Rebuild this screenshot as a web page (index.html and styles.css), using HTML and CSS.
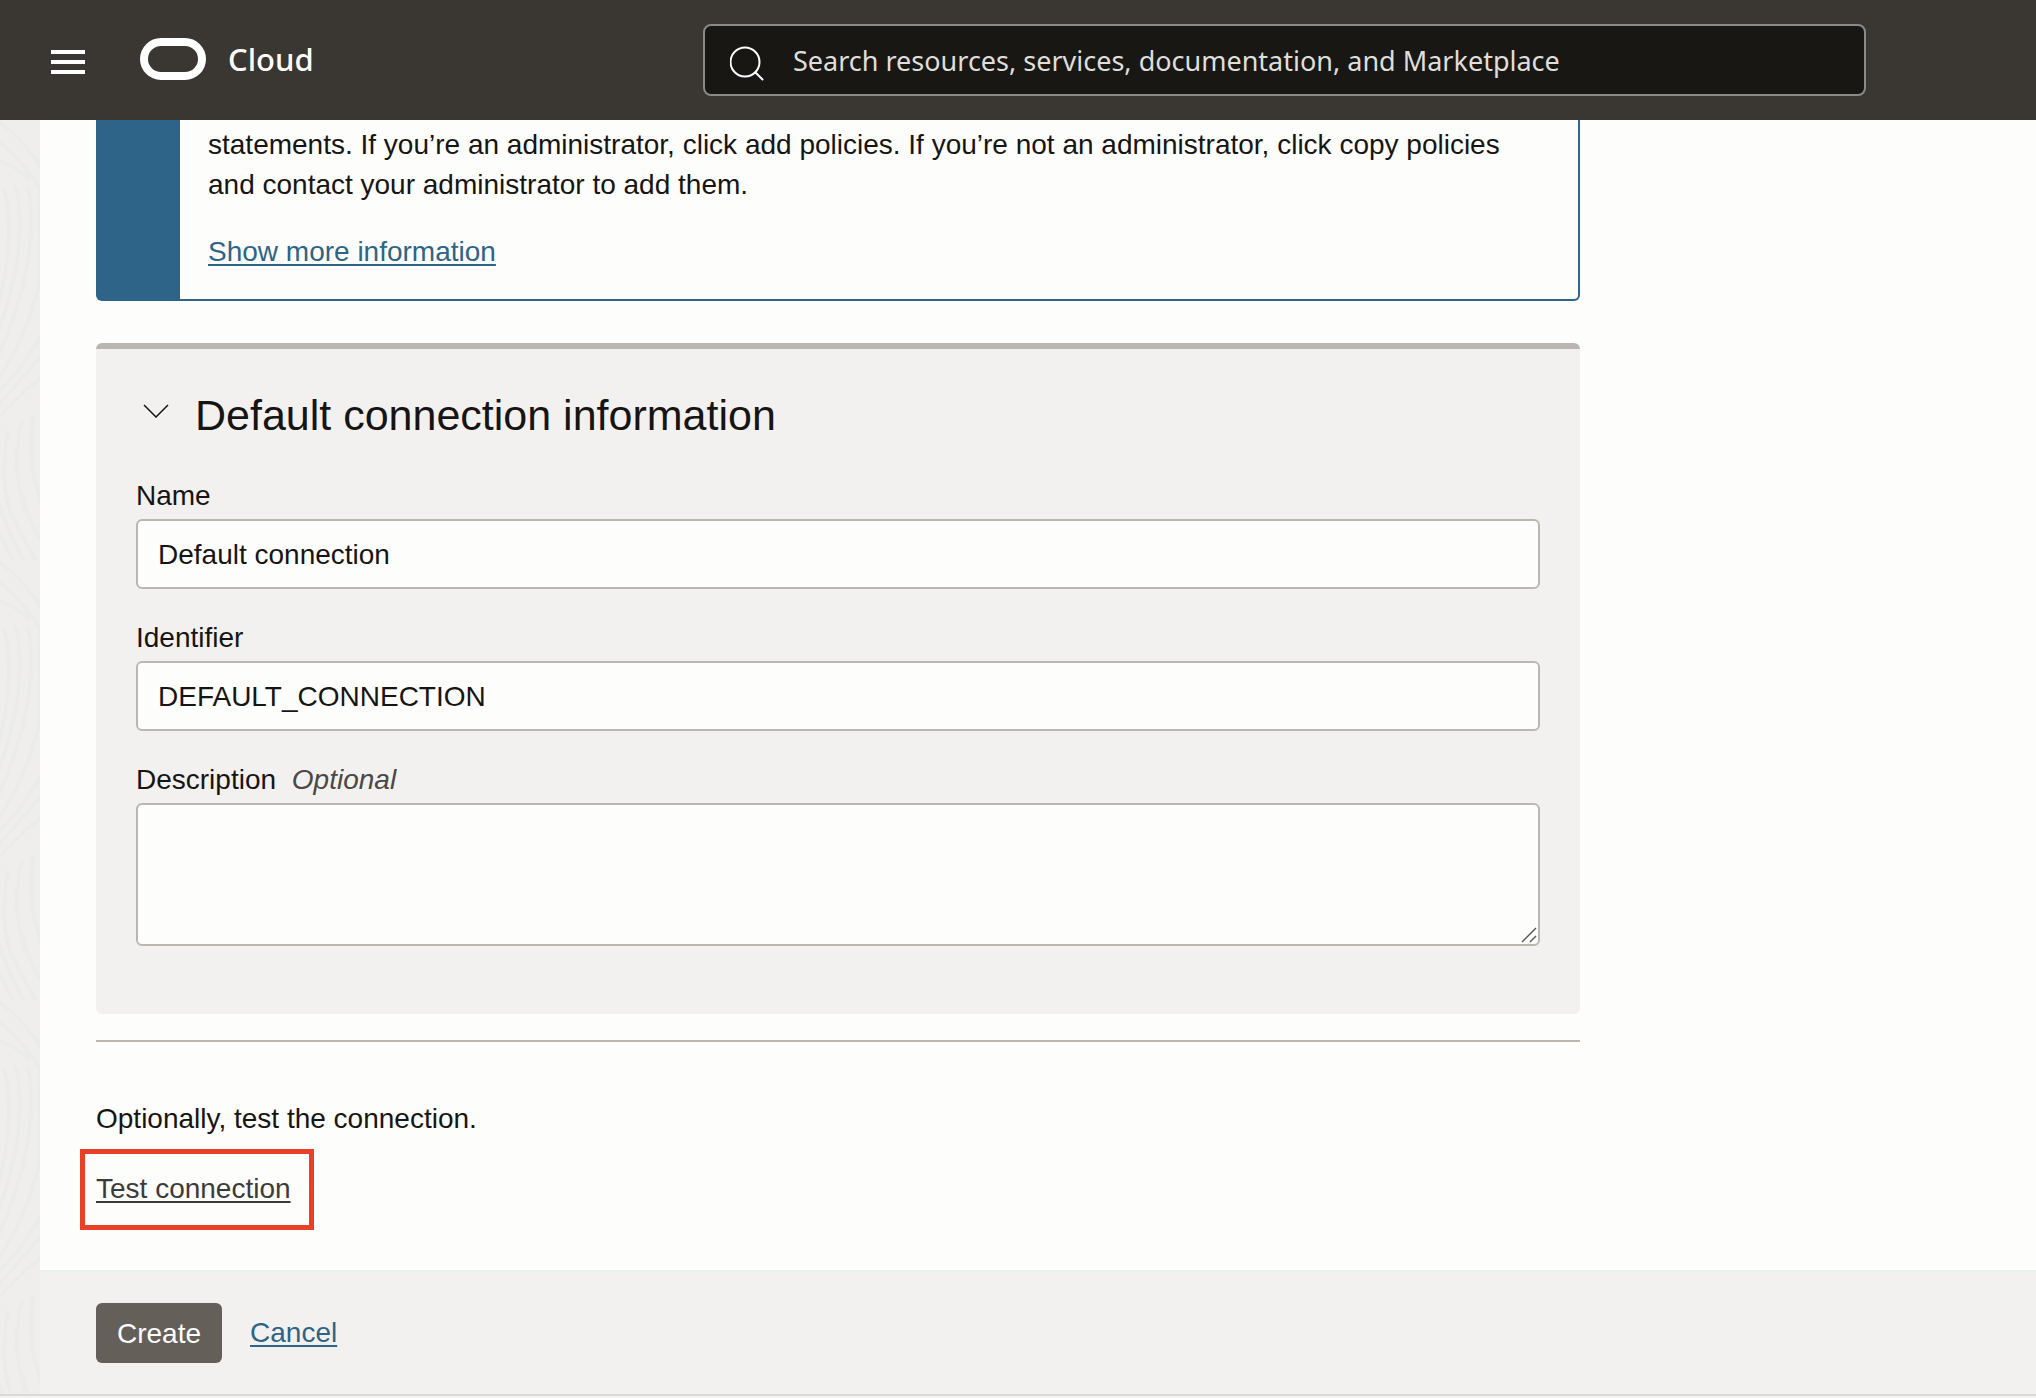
FILE: index.html
```html
<!DOCTYPE html>
<html lang="en">
<head>
<meta charset="utf-8">
<meta name="viewport" content="width=device-width, initial-scale=1">
<title>Create connection</title>
<link rel="stylesheet" href="styles.css">
</head>
<body>
<header class="topbar">
  <div class="brand">
    <button class="menu-button" type="button" aria-label="Open navigation menu">
      <svg width="34" height="24" viewBox="0 0 34 24" fill="#fff" aria-hidden="true"><path d="M0 0h34v4H0zM0 10h34v4H0zM0 20h34v4H0z"/></svg>
    </button>
    <a class="logo" href="#">
      <svg width="66" height="42" viewBox="0 0 66 42" fill="none" stroke="#fff" stroke-width="8" aria-hidden="true"><rect x="4" y="4" width="58" height="34" rx="17"/></svg>
      <span>Cloud</span>
    </a>
  </div>
  <label class="search">
    <svg width="36" height="36" viewBox="0 0 36 36" fill="none" stroke="#fff" stroke-width="2" stroke-linecap="round" aria-hidden="true"><circle cx="15" cy="16" r="14.5"/><path d="M25.500 26.500l7 7"/></svg>
    <input class="search-input" type="search" placeholder="Search resources, services, documentation, and Marketplace" aria-label="Search">
  </label>
</header>
<div class="shell">
  <div class="rail">
    <svg class="rail-texture" width="100%" height="100%" aria-hidden="true">
      <defs>
        <pattern id="waves" width="40" height="440" patternUnits="userSpaceOnUse">
          <g fill="none" stroke="#ebebea" stroke-width="4">
            <path d="M-20 -10Q20 10 50 60M-20 10Q14 24 50 84M-10 40Q10 40 30 60"/>
            <path d="M4 70Q18 120 -6 200M16 66Q30 130 -6 222M28 66Q42 140 -6 246M40 70V160Q30 210 -6 268"/>
            <path d="M50 200Q24 250 -6 276M50 226Q24 256 -6 290M50 250Q24 270 -6 302"/>
            <path d="M8 310Q-2 370 14 400T50 470M22 300Q10 350 26 390T50 430M34 296Q24 340 44 390M-8 340Q-4 400 30 450M-10 390Q0 420 20 450"/>
          </g>
        </pattern>
      </defs>
      <rect width="100%" height="100%" fill="url(#waves)"/>
    </svg>
  </div>
  <div class="page">
    <main class="content">
      <section class="notice">
        <div class="notice-body">
          <p class="notice-text">statements. If you’re an administrator, click add policies. If you’re not an administrator, click copy policies and contact your administrator to add them.</p>
          <a class="link" href="#">Show more information</a>
        </div>
      </section>
      <section class="panel">
        <h2 class="panel-title">
          <button class="panel-toggle" type="button" aria-expanded="true">
            <svg width="26" height="14" viewBox="0 0 26 14" fill="none" stroke="#161513" stroke-width="1.500" aria-hidden="true"><path d="M1 1l12 12L25 1"/></svg>
            <span>Default connection information</span>
          </button>
        </h2>
        <div class="field">
          <label for="name">Name</label>
          <input class="control" id="name" type="text" value="Default connection">
        </div>
        <div class="field">
          <label for="identifier">Identifier</label>
          <input class="control" id="identifier" type="text" value="DEFAULT_CONNECTION">
        </div>
        <div class="field">
          <label for="description">Description <em class="optional">Optional</em></label>
          <div class="area">
            <textarea class="control control-area" id="description"></textarea>
            <svg class="grip" width="16" height="16" viewBox="0 0 16 16" stroke="#5c5c5c" stroke-width="1.500" aria-hidden="true"><path d="M1 15L15 1M9 15l6-6"/></svg>
          </div>
        </div>
      </section>
      <hr class="rule">
      <section class="test">
        <p class="test-text">Optionally, test the connection.</p>
        <div class="highlight"><a class="link link-dark" href="#">Test connection</a></div>
      </section>
    </main>
    <footer class="actions">
      <button class="create" type="button">Create</button>
      <a class="link" href="#">Cancel</a>
    </footer>
  </div>
</div>
</body>
</html>
```
FILE: styles.css
```css
* {
  box-sizing: border-box;
}

body {
  display: flex;
  flex-direction: column;
  min-height: 100vh;
  margin: 0;
  background: #f4f3f2;
  color: #161513;
  font: 28px/40px "Helvetica Neue", "Liberation Sans", Arial, sans-serif;
}

button,
input,
textarea {
  font: inherit;
  color: inherit;
}

p,
h2 {
  margin: 0;
}

.topbar {
  display: flex;
  align-items: center;
  height: 120px;
  padding-right: 170px;
  background: #3a3631;
  color: #fff;
  font-family: "Noto Sans", sans-serif;
}

.brand {
  display: flex;
  align-items: center;
  gap: 55px;
  flex: 0 0 703px;
  padding-left: 51px;
}

.menu-button {
  display: flex;
  padding: 4px 0 0;
  border: 0;
  background: none;
}

.logo {
  display: flex;
  align-items: center;
  gap: 22px;
  padding-bottom: 2px;
  color: #fff;
  font-size: 31px;
  font-weight: 500;
  text-decoration: none;
}

.search {
  display: flex;
  align-items: center;
  gap: 27px;
  flex: 1;
  height: 72px;
  padding: 0 25px;
  border: 2px solid #8b8987;
  border-radius: 8px;
  background: #181714;
}

.search svg {
  flex: none;
  margin-top: 8px;
}

.search-input {
  flex: 1;
  min-width: 0;
  height: 60px;
  padding: 0;
  border: 0;
  outline: 0;
  background: none;
  font-size: 27px;
  appearance: none;
}

.search-input::placeholder {
  color: #dfdedb;
  opacity: 1;
}

.shell {
  display: flex;
  flex: 1;
  margin-bottom: 2px;
  border-bottom: 2px solid #dad9d8;
}

.rail {
  position: relative;
  flex: 0 0 40px;
  background: #efeeed;
}

.rail-texture {
  position: absolute;
  inset: 0;
}

.page {
  display: flex;
  flex-direction: column;
  flex: 1;
  min-width: 0;
}

.content {
  flex: 1;
  padding: 0 56px 40px;
  background: #fdfdfb;
}

.notice,
.panel,
.rule {
  max-width: 1484px;
}

.notice {
  border: solid #2d6487;
  border-width: 0 2px 2px 84px;
  border-radius: 0 0 6px 6px;
}

.notice-body {
  padding: 5px 28px 27px;
}

.notice-text {
  margin-bottom: 27px;
}

.link {
  color: #2d6487;
  text-decoration: underline;
  text-decoration-thickness: 2px;
  text-underline-offset: 3px;
}

.link-dark {
  color: #3d3b39;
}

.panel {
  margin-top: 42px;
  padding: 41px 40px 68px;
  border-top: 6px solid #bbb5af;
  border-radius: 6px;
  background: #f3f1f0;
}

.panel-title {
  margin-bottom: 36px;
  font-weight: 400;
}

.panel-toggle {
  display: flex;
  align-items: center;
  gap: 26px;
  padding: 0 0 0 7px;
  border: 0;
  background: none;
  font-size: 43px;
  line-height: 50px;
}

.panel-toggle svg {
  margin-bottom: 8px;
}

.field {
  margin-bottom: 29px;
}

.field:last-child {
  margin-bottom: 0;
}

.field label {
  display: block;
  margin-bottom: 3px;
}

.optional {
  margin-left: 8px;
  color: #4a4845;
}

.control {
  display: block;
  width: 100%;
  height: 70px;
  padding: 2px 20px 0;
  border: 2px solid #bbb7b0;
  border-radius: 6px;
  outline: 0;
  background: #fdfdfb;
}

.area {
  position: relative;
}

.control-area {
  height: 143px;
  padding: 16px 20px;
  resize: none;
}

.grip {
  position: absolute;
  right: 3px;
  bottom: 3px;
}

.rule {
  margin: 26px 0 0;
  border: 0;
  border-top: 2px solid #bbb7b0;
}

.test {
  padding-top: 57px;
}

.highlight {
  width: fit-content;
  margin: 10px 0 0 -16px;
  padding: 15px 18px 16px 11px;
  border: 5px solid #ea4027;
}

.highlight .link {
  display: block;
}

.actions {
  display: flex;
  align-items: center;
  gap: 28px;
  height: 124px;
  padding: 0 56px;
  border-top: 2px solid #e8f0f3;
  background: #f3f1f0;
}

.create {
  height: 60px;
  padding: 1px 21px 0;
  border: 0;
  border-radius: 6px;
  background: #655f5a;
  color: #fff;
}
```
